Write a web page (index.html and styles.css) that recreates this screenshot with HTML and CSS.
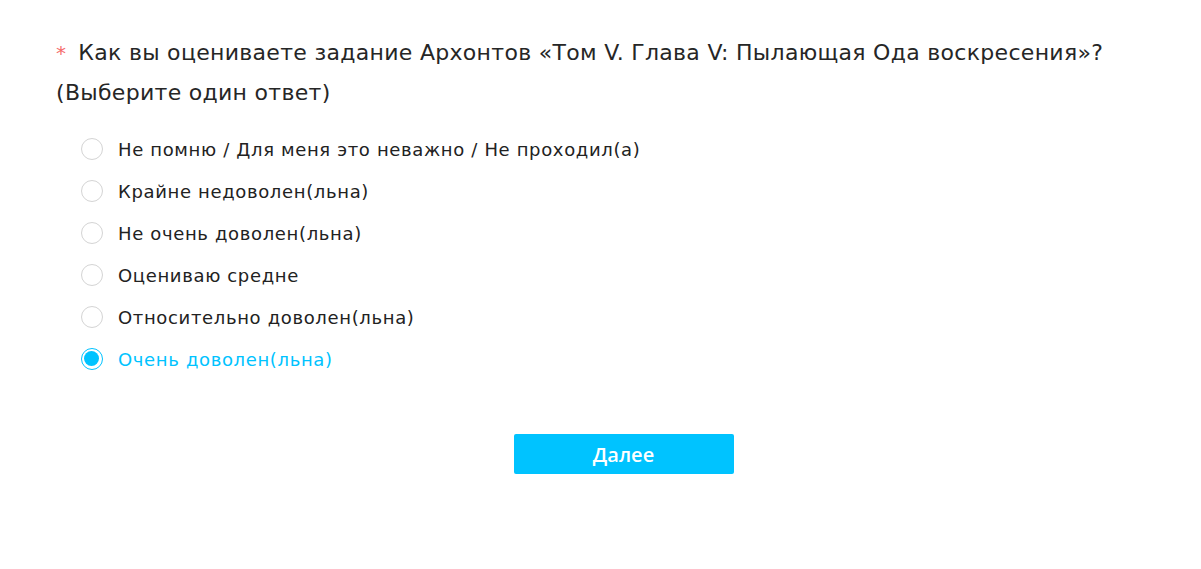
FILE: index.html
```html
<!DOCTYPE html>
<html lang="ru">
<head>
    <meta charset="UTF-8">
    <meta name="viewport" content="width=device-width, initial-scale=1.0">
    <title>Опрос</title>
    <link rel="stylesheet" href="styles.css">
</head>
<body>
    <div class="question">
        <div class="question-title">
            <span class="required">*</span><span class="title-text">Как вы оцениваете задание Архонтов «Том V. Глава V: Пылающая Ода воскресения»? (Выберите один ответ)</span>
        </div>

        <div class="options">
            <label class="option">
                <input type="radio" name="q1">
                <span class="radio"></span>
                <span class="option-text">Не помню / Для меня это неважно / Не проходил(а)</span>
            </label>
            <label class="option">
                <input type="radio" name="q1">
                <span class="radio"></span>
                <span class="option-text">Крайне недоволен(льна)</span>
            </label>
            <label class="option">
                <input type="radio" name="q1">
                <span class="radio"></span>
                <span class="option-text">Не очень доволен(льна)</span>
            </label>
            <label class="option">
                <input type="radio" name="q1">
                <span class="radio"></span>
                <span class="option-text">Оцениваю средне</span>
            </label>
            <label class="option">
                <input type="radio" name="q1">
                <span class="radio"></span>
                <span class="option-text">Относительно доволен(льна)</span>
            </label>
            <label class="option">
                <input type="radio" name="q1" checked>
                <span class="radio"></span>
                <span class="option-text">Очень доволен(льна)</span>
            </label>
        </div>

        <div class="actions">
            <button class="next-btn">Далее</button>
        </div>
    </div>
</body>
</html>
```

FILE: styles.css
```css
body {
    font-family: 'DejaVu Sans', 'Open Sans', sans-serif;
    margin: 0;
    background: #fff;
    color: #222;
}
.question {
    padding: 33px 10px 0 56px;
}
.question-title {
    font-size: 22px;
    letter-spacing: 0.3px;
    line-height: 40px;
    color: #262626;
    padding-right: 60px;
}
.required {
    color: #f56c6c;
    margin-right: 12px;
    font-size: 20px;
}
.options {
    margin-top: 15px;
    padding-left: 25px;
    display: flex;
    flex-direction: column;
}
.option {
    display: flex;
    align-items: center;
    height: 42px;
    font-size: 18px;
    letter-spacing: 0.65px;
    cursor: pointer;
}
.option input {
    display: none;
}
.radio {
    width: 22px;
    height: 22px;
    border: 1px solid #d4d4d4;
    border-radius: 50%;
    margin-right: 15px;
    box-sizing: border-box;
    position: relative;
}
.option input:checked + .radio {
    border: 1.5px solid #00c3ff;
}
.option input:checked + .radio::after {
    content: '';
    position: absolute;
    left: 2px;
    top: 2px;
    width: 15px;
    height: 15px;
    border-radius: 50%;
    background: #00c3ff;
}
.option input:checked ~ .option-text {
    color: #00c3ff;
}
.actions {
    display: flex;
    justify-content: center;
    margin-top: 54px;
}
.next-btn {
    width: 220px;
    height: 40px;
    border: none;
    border-radius: 2px;
    background: #00c3ff;
    color: #fff;
    font-family: 'Open Sans', sans-serif;
    font-size: 20px;
    font-weight: 600;
    cursor: pointer;
}
```
